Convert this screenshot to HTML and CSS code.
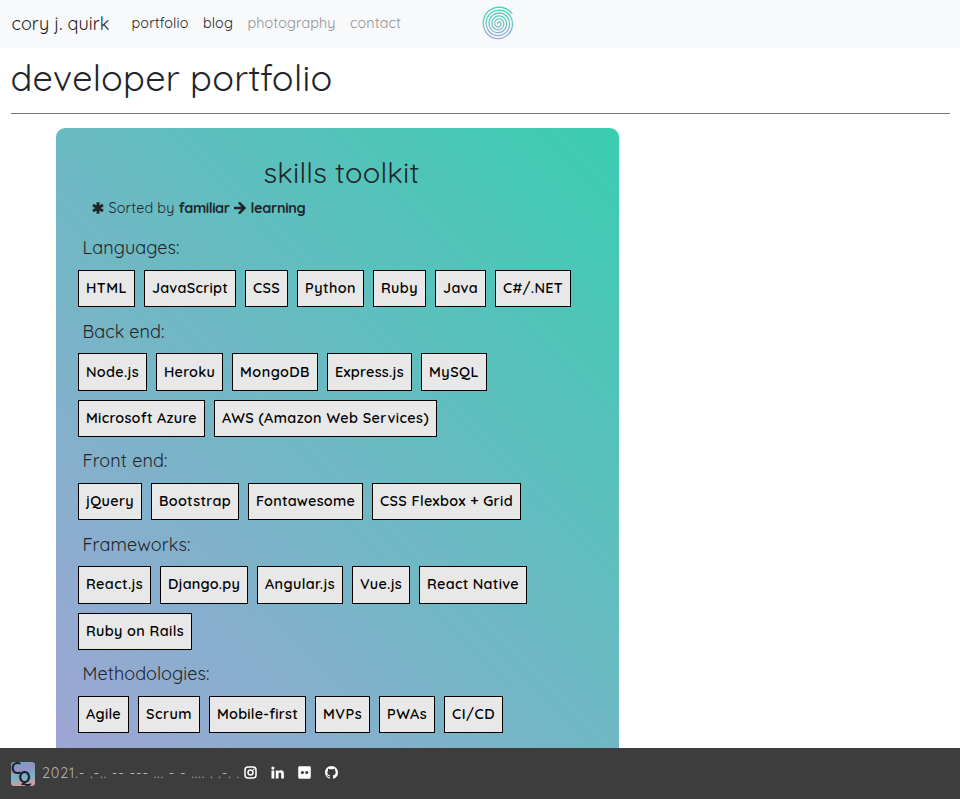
FILE: index.html
```html
<!DOCTYPE html>
<html lang="en">
<head>
<meta charset="utf-8">
<title>cory j. quirk</title>
<link rel="stylesheet" href="styles.css">
</head>
<body>
<header class="navbar">
  <a class="brand"><span data-fit="98">cory j. quirk</span></a>
  <nav class="links">
    <a><span data-fit="57">portfolio</span></a>
    <a><span data-fit="30">blog</span></a>
    <a class="muted"><span data-fit="88">photography</span></a>
    <a class="muted"><span data-fit="51">contact</span></a>
  </nav>
  <svg class="spiral" viewBox="-17 -17 34 34">
    <defs><linearGradient id="swirl" gradientUnits="userSpaceOnUse" x1="9" y1="-13" x2="-9" y2="13"><stop offset="0" stop-color="#38d6ae"/><stop offset=".45" stop-color="#63c8c0"/><stop offset="1" stop-color="#b49fdc"/></linearGradient></defs>
    <path transform="rotate(-35)" fill="none" stroke="url(#swirl)" stroke-width="1.15" d="M0 0A1.3 1.3 0 0 1 2.6 0A2.6 2.6 0 0 1 -2.6 0A3.9 3.9 0 0 1 5.2 0A5.2 5.2 0 0 1 -5.2 0A6.5 6.5 0 0 1 7.8 0A7.8 7.8 0 0 1 -7.8 0A9.1 9.1 0 0 1 10.4 0A10.4 10.4 0 0 1 -10.4 0A11.7 11.7 0 0 1 13 0A13 13 0 0 1 -13 0A14.3 14.3 0 0 1 15.6 0"/>
  </svg>
</header>
<main class="page">
  <h1><span data-fit="322">developer portfolio</span></h1>
  <section class="card">
    <h2><span data-fit="156">skills toolkit</span></h2>
    <p class="note">
      <svg class="star" viewBox="0 0 12 12"><path d="M6 .3v11.4M1 3.1l10 5.8M11 3.1l-10 5.8" stroke="currentColor" stroke-width="2.9" fill="none"/></svg>
      <span data-fit="66">Sorted by</span>
      <b><span data-fit="51">familiar</span></b>
      <svg class="arrow" viewBox="0 0 12 12"><path d="M.8 6H10M5.6 1.2 10.4 6 5.6 10.8" stroke="currentColor" stroke-width="2.6" fill="none" stroke-linecap="round"/></svg>
      <b><span data-fit="55">learning</span></b>
    </p>
    <h3><span data-fit="97">Languages:</span></h3>
    <ul class="chips">
      <li><span data-fit="41">HTML</span></li><li><span data-fit="76">JavaScript</span></li><li><span data-fit="27">CSS</span></li><li><span data-fit="51">Python</span></li><li><span data-fit="37">Ruby</span></li><li><span data-fit="35">Java</span></li><li><span data-fit="60">C#/.NET</span></li>
    </ul>
    <h3><span data-fit="82">Back end:</span></h3>
    <ul class="chips">
      <li><span data-fit="53">Node.js</span></li><li><span data-fit="51">Heroku</span></li><li><span data-fit="70">MongoDB</span></li><li><span data-fit="69">Express.js</span></li><li><span data-fit="50">MySQL</span></li><li><span data-fit="111">Microsoft Azure</span></li><li><span data-fit="207">AWS (Amazon Web Services)</span></li>
    </ul>
    <h3><span data-fit="85">Front end:</span></h3>
    <ul class="chips">
      <li><span data-fit="48">jQuery</span></li><li><span data-fit="72">Bootstrap</span></li><li><span data-fit="99">Fontawesome</span></li><li><span data-fit="133">CSS Flexbox + Grid</span></li>
    </ul>
    <h3><span data-fit="108">Frameworks:</span></h3>
    <ul class="chips">
      <li><span data-fit="57">React.js</span></li><li><span data-fit="72">Django.py</span></li><li><span data-fit="70">Angular.js</span></li><li><span data-fit="42">Vue.js</span></li><li><span data-fit="92">React Native</span></li><li><span data-fit="98">Ruby on Rails</span></li>
    </ul>
    <h3><span data-fit="127">Methodologies:</span></h3>
    <ul class="chips">
      <li><span data-fit="35">Agile</span></li><li><span data-fit="46">Scrum</span></li><li><span data-fit="81">Mobile-first</span></li><li><span data-fit="39">MVPs</span></li><li><span data-fit="40">PWAs</span></li><li><span data-fit="43">CI/CD</span></li>
    </ul>
  </section>
</main>
<footer class="footer">
  <svg class="monogram" viewBox="0 0 24 24"><text><tspan x="0" y="12.2">C</tspan><tspan x="7.6" y="21.4">Q</tspan></text></svg>
  <span class="morse"><span data-fit="198">2021.- .-.. -- --- ... - - .... . .-. .</span></span>
  <div class="social">
    <svg viewBox="0 0 13 13"><rect x="1" y="1" width="11" height="11" rx="3" fill="none" stroke="#fff" stroke-width="1.5"/><circle cx="6.5" cy="6.5" r="2.5" fill="none" stroke="#fff" stroke-width="1.5"/><circle cx="9.8" cy="3.3" r=".8" fill="#fff"/></svg>
    <svg viewBox="0 0 13 13"><path fill="#fff" d="M.5 4.5h2.8v8H.5zM1.9.5a1.6 1.6 0 1 1 0 3.2 1.6 1.6 0 0 1 0-3.2zM4.8 4.5h2.6v1.1c.5-.8 1.3-1.3 2.4-1.3 2.5 0 3.1 1.5 3.1 3.8v4.4h-2.7V8.6c0-1.1-.1-2-1.3-2-1.1 0-1.4.9-1.4 2v3.9H4.8z"/></svg>
    <svg viewBox="0 0 13 13"><path fill="#fff" fill-rule="evenodd" d="M1.6.3h9.8a1.4 1.4 0 0 1 1.4 1.4v9.6a1.4 1.4 0 0 1-1.4 1.4H1.6A1.4 1.4 0 0 1 .2 11.3V1.7A1.4 1.4 0 0 1 1.6.3zM4.4 4.9a1.6 1.6 0 1 0 0 3.2 1.6 1.6 0 0 0 0-3.2zM8.7 4.9a1.6 1.6 0 1 0 0 3.2 1.6 1.6 0 0 0 0-3.2z"/></svg>
    <svg viewBox="0 0 16 16"><path fill="#fff" d="M8 0C3.58 0 0 3.58 0 8c0 3.54 2.29 6.53 5.47 7.59.4.07.55-.17.55-.38 0-.19-.01-.82-.01-1.49-2.01.37-2.53-.49-2.69-.94-.09-.23-.48-.94-.82-1.13-.28-.15-.68-.52-.01-.53.63-.01 1.08.58 1.23.82.72 1.21 1.87.87 2.33.66.07-.52.28-.87.51-1.07-1.78-.2-3.64-.89-3.64-3.95 0-.87.31-1.59.82-2.15-.08-.2-.36-1.02.08-2.12 0 0 .67-.21 2.2.82a7.6 7.6 0 0 1 4 0c1.53-1.04 2.2-.82 2.2-.82.44 1.1.16 1.92.08 2.12.51.56.82 1.27.82 2.15 0 3.07-1.87 3.75-3.65 3.95.29.25.54.73.54 1.48 0 1.07-.01 1.93-.01 2.2 0 .21.15.46.55.38A8 8 0 0 0 16 8c0-4.42-3.58-8-8-8z"/></svg>
  </div>
</footer>
<script src="fit.js"></script>
</body>
</html>
```
FILE: styles.css
```css
* { box-sizing: border-box; }
body {
  margin: 0;
  height: 799px;
  overflow: hidden;
  display: flex;
  flex-direction: column;
  background: #fff;
  color: #212529;
  font-family: Quicksand, Lato, sans-serif;
  font-size: 14.4px;
}
h1, h2, h3, p, ul { margin: 0; padding: 0; font-weight: 400; }
[data-fit] { display: inline-block; white-space: nowrap; }

.navbar {
  flex: none;
  height: 48px;
  display: flex;
  align-items: center;
  padding: 0 0 2px 11.5px;
  background: #f8f9fb;
}
.brand { width: 120px; font-size: 18px; font-weight: 450; color: #1b1c1d; }
.links { display: flex; gap: 14.5px; width: 347.5px; font-weight: 450; color: #1b1c1d; }
.links .muted { color: #8f9192; }
.spiral { width: 38px; height: 38px; margin-top: 2px; }

.page { flex: 1; min-height: 0; overflow: hidden; padding: 0 10px 0 11px; }
h1 {
  height: 66px;
  padding-top: 8px;
  border-bottom: 1px solid #777;
  font-size: 36px;
  font-weight: 450;
  line-height: 44px;
}
h1 span { margin-left: -.5px; }
.card {
  width: 563px;
  height: 660px;
  margin: 14px 0 0 45px;
  padding: 26px 22px 0;
  border-radius: 9px;
  background: linear-gradient(45deg, #a2a4d6, #3acdb1);
}
h2 { padding-left: 8px; text-align: center; font-size: 29px; font-weight: 450; line-height: 36px; }
.note { display: flex; align-items: center; height: 18px; margin-top: 9px; padding-left: 14px; }
.star { width: 12px; height: 12px; margin-right: 4.5px; }
.arrow { width: 12px; height: 12px; margin: 0 5px 0 4px; }
.note b { font-weight: 700; }
.note > span { margin-right: 4px; }
h3 { height: 45.95px; padding: 13.2px 0 0 4.5px; font-size: 18px; line-height: 22px; }
.note + h3 { height: 53.15px; padding-top: 20.2px; }
.chips { display: flex; flex-wrap: wrap; gap: 9.3px 9px; list-style: none; }
.chips li {
  height: 37.25px;
  padding: .175px 7px 0;
  border: 1px solid #000;
  background: #e8e8e8;
  color: #000;
  font-weight: 600;
  line-height: 34px;
}

.footer {
  flex: none;
  height: 51px;
  display: flex;
  align-items: center;
  padding-left: 11px;
  background: #3d3d3d;
}
.monogram {
  width: 24px;
  height: 24px;
  margin-right: 7px;
  border-radius: 3px;
  background: linear-gradient(170deg, #68a9c7, #9990c2 30%, #71b4ca 60%, #d69a9c 90%);
}
.monogram text { font-size: 16px; font-weight: 700; fill: #172027; }
.morse { width: 202px; padding-bottom: 2px; font-weight: 450; color: #b3b3b3; }
.social { display: flex; gap: 14px; padding-bottom: 3px; }
.social svg { width: 13px; height: 13px; }
```
FILE: fit.js
```js
// Tracks each label so that it fills its set width.
document.querySelectorAll('[data-fit]').forEach(function (el) {
  var target = Number(el.dataset.fit);
  var natural = el.getBoundingClientRect().width;
  el.style.letterSpacing = (target - natural) / el.textContent.length + 'px';
  el.style.width = target + 'px';
});
```
